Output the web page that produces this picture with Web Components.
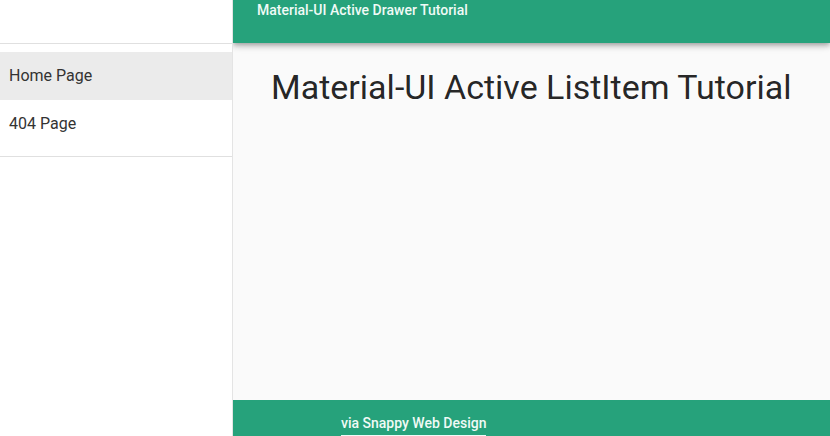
<!DOCTYPE html>
<html lang="en"><head><meta charset="utf-8"><title>Material-UI Active Drawer Tutorial</title>
<style>html,body{margin:0}body{font-family:Roboto,"Liberation Sans",sans-serif;font-size:16px;line-height:24px;color:rgba(0,0,0,.87);background:#fafafa}</style></head>
<body><app-shell></app-shell>
<script>
const define=(name,html)=>customElements.define(name,class extends HTMLElement{constructor(){super();const t=document.createElement('template');t.innerHTML=html;this.attachShadow({mode:'open'}).append(t.content.cloneNode(true));}});
define('drawer-item',`<style>:host{display:block}a{display:block;padding:12px 9px;color:#333;text-decoration:none}:host([active]) a{background:#ebebeb}</style><a href="#"><slot></slot></a>`);
define('side-drawer',`<style>:host{display:block;background:#fff;border-right:1px solid #e4e4e4}header{height:43px;border-bottom:1px solid #e0e0e0}nav{padding:8px 0;border-bottom:1px solid #e0e0e0}</style><header></header><nav><slot></slot></nav>`);
define('app-bar',`<style>:host{display:block;background:#26a27b;color:#f0faf6;font-size:14px;font-weight:500;line-height:20px;padding:0 24px 23px;box-shadow:0 2px 4px -1px rgba(0,0,0,.2),0 4px 5px rgba(0,0,0,.14),0 1px 10px rgba(0,0,0,.12);clip-path:inset(0 0 -16px 0)}</style><slot></slot>`);
define('page-title',`<style>:host{display:block;flex:1;padding:24px 24px 0 38px}h1{margin:0;font-size:34px;line-height:40px;font-weight:400}</style><h1><slot></slot></h1>`);
define('page-footer',`<style>:host{display:flex;background:#26a27b;color:#f0faf6;font-size:14px;font-weight:500;line-height:20px;padding:13px 24px 0 108px}a{color:inherit;text-decoration:none;padding-bottom:2px;border-bottom:1px solid #f0faf6}</style><a href="#"><slot></slot></a>`);
define('app-shell',`<style>:host{display:grid;grid-template-columns:233px 1fr;min-height:100vh}main{display:flex;flex-direction:column;min-width:0}</style><side-drawer><drawer-item active>Home Page</drawer-item><drawer-item>404 Page</drawer-item></side-drawer><main><app-bar>Material-UI Active Drawer Tutorial</app-bar><page-title>Material-UI Active ListItem Tutorial</page-title><page-footer>via Snappy Web Design</page-footer></main>`);
</script></body></html>
